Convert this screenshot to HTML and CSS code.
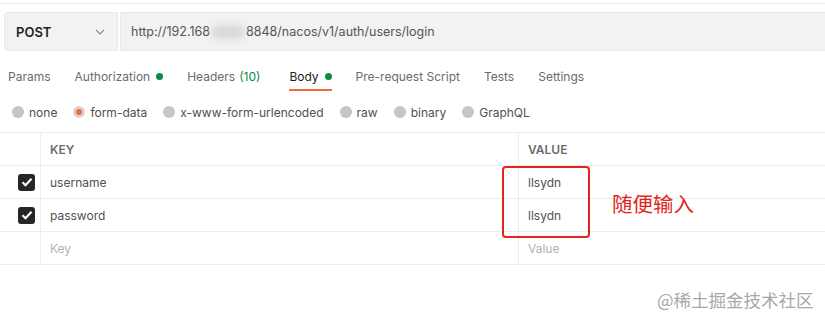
FILE: index.html
```html
<!DOCTYPE html>
<html lang="en">
<head>
  <meta charset="UTF-8">
  <title>Request</title>
  <link rel="stylesheet" href="styles.css">
</head>
<body>

<div class="page">
  <div class="top-line"></div>

  <div class="request-bar">
    <div class="method">
      <span>POST</span>
      <svg class="chevron" width="10" height="6" viewBox="0 0 10 6"><path d="M1 1l4 4 4-4" fill="none" stroke="#8a8a8a" stroke-width="1.1"/></svg>
    </div>
    <div class="url">http://192.168<span class="blur"></span>8848/nacos/v1/auth/users/login</div>
  </div>

  <div class="tabs">
    <span class="tab">Params</span>
    <span class="tab">Authorization <i class="dot"></i></span>
    <span class="tab wide">Headers <em class="count">(10)</em></span>
    <span class="tab active">Body <i class="dot"></i></span>
    <span class="tab">Pre-request Script</span>
    <span class="tab">Tests</span>
    <span class="tab">Settings</span>
  </div>

  <div class="body-types">
    <span class="radio"><i></i>none</span>
    <span class="radio checked"><i></i>form-data</span>
    <span class="radio"><i></i>x-www-form-urlencoded</span>
    <span class="radio"><i></i>raw</span>
    <span class="radio"><i></i>binary</span>
    <span class="radio"><i></i>GraphQL</span>
  </div>

  <div class="kv-table">
    <div class="row head">
      <div class="cell check"></div>
      <div class="cell">KEY</div>
      <div class="cell">VALUE</div>
    </div>
    <div class="row">
      <div class="cell check"><span class="box"><svg width="12" height="10" viewBox="0 0 12 10"><path d="M1.5 5.2l3 3 6-6.4" fill="none" stroke="#fff" stroke-width="2.2"/></svg></span></div>
      <div class="cell">username</div>
      <div class="cell">llsydn</div>
    </div>
    <div class="row">
      <div class="cell check"><span class="box"><svg width="12" height="10" viewBox="0 0 12 10"><path d="M1.5 5.2l3 3 6-6.4" fill="none" stroke="#fff" stroke-width="2.2"/></svg></span></div>
      <div class="cell">password</div>
      <div class="cell">llsydn</div>
    </div>
    <div class="row">
      <div class="cell check"></div>
      <div class="cell placeholder">Key</div>
      <div class="cell placeholder">Value</div>
    </div>
  </div>

  <div class="mark-box"></div>
  <div class="mark-text">随便输入</div>
  <div class="watermark">@稀土掘金技术社区</div>
</div>

</body>
</html>
```

FILE: styles.css
```css
body { margin: 0; background: #fff; font-family: Inter, "Noto Sans", "Noto Sans CJK SC", sans-serif; font-size: 12px; color: #505050; }
.page { position: relative; width: 825px; height: 324px; overflow: hidden; }
.top-line { height: 3px; border-bottom: 1px solid #ececec; }

.request-bar { display: flex; height: 39px; margin: 8px 0 0 4px; }
.method { width: 114px; display: flex; align-items: center; justify-content: space-between; padding: 0 12px 0 11px; box-sizing: border-box; background: #f2f2f2; border: 1px solid #e8e8e8; border-radius: 4px 0 0 4px; color: #222; font-weight: 600; font-size: 13px; }
.url { flex: 1; display: flex; align-items: center; margin-left: 2px; padding-left: 10px; background: #f2f2f2; border: 1px solid #e8e8e8; border-right: none; color: #555; font-size: 12.5px; }
.blur { display: inline-block; width: 34px; height: 14px; margin: 0 1px; background: #d9d9d9; border-radius: 7px; filter: blur(3px); }

.tabs { display: flex; height: 38px; margin-top: 6px; padding-left: 8px; align-items: center; }
.tab { position: relative; display: flex; align-items: center; margin-right: 24px; color: #6b6b6b; height: 100%; }
.tab.wide { margin-right: 29px; }
.tab.active { color: #212121; }
.tab.active::after { content: ""; position: absolute; left: 0; right: 0; bottom: 4px; height: 2px; background: #f26b3a; }
.dot { display: inline-block; width: 7px; height: 7px; border-radius: 50%; background: #0b8a42; margin-left: 6px; }
.count { font-style: normal; color: #0b8a42; margin-left: 4px; }

.body-types { display: flex; height: 34px; padding: 0 0 3px 12px; align-items: center; }
.radio { display: flex; align-items: center; margin-right: 16px; color: #505050; }
.radio i { width: 12px; height: 12px; border-radius: 50%; background: #c6c6c6; margin-right: 5px; box-sizing: border-box; }
.radio.checked i { background: #f26b3a; border: 3px solid #d4d4d4; }

.kv-table { border-top: 1px solid #ececec; }
.row { display: grid; grid-template-columns: 40px 478px 1fr; height: 32px; border-bottom: 1px solid #ececec; }
.cell { display: flex; align-items: center; padding-left: 9px; border-left: 1px solid #ececec; color: #505050; }
.cell.check { border-left: none; padding-left: 18px; }
.head .cell { font-weight: 600; color: #6b6b6b; }
.placeholder { color: #b3b3b3; }
.box { width: 17px; height: 17px; border-radius: 3px; background: #262626; display: flex; align-items: center; justify-content: center; }

.mark-box { position: absolute; left: 502px; top: 166px; width: 84px; height: 68px; border: 2px solid #e2251c; border-radius: 4px; }
.mark-text { position: absolute; left: 612px; top: 188px; font-size: 20.5px; color: #e2251c; font-family: "Noto Sans CJK SC", sans-serif; }
.watermark { position: absolute; left: 657px; top: 287px; font-size: 17.5px; color: #a8a8a8; font-family: "Noto Sans CJK SC", sans-serif; }
```
